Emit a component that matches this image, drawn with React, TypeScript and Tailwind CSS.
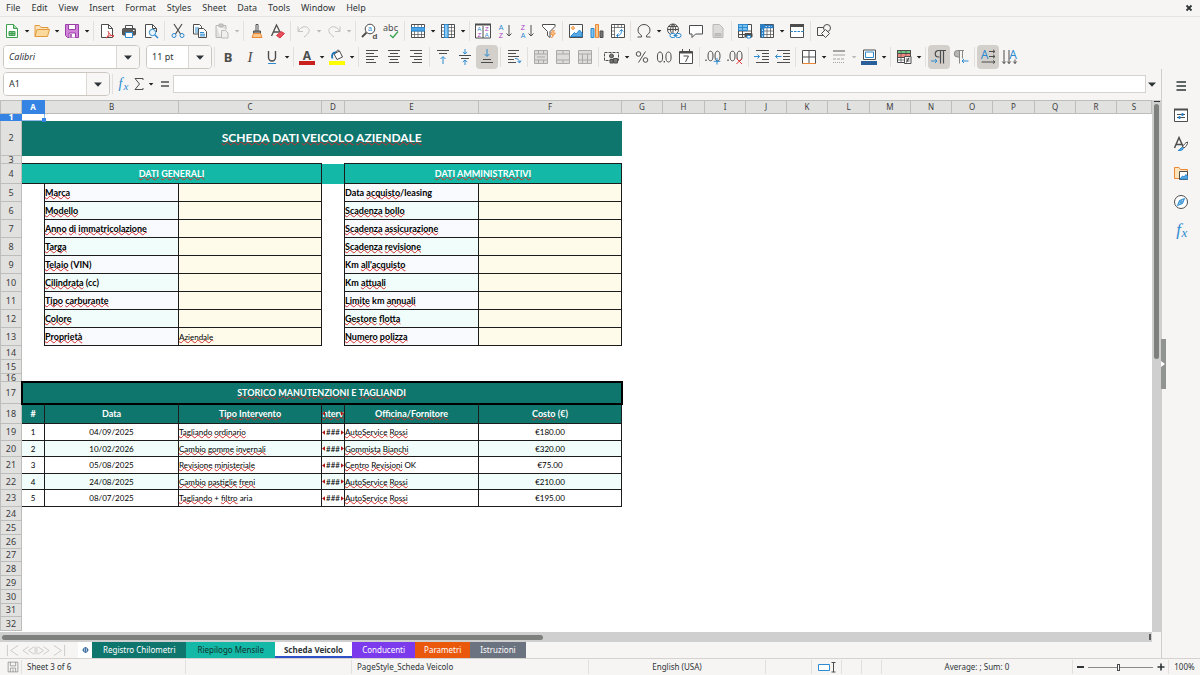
import { Fragment, type ReactNode } from "react";

const INK = "#4d4d4d";
const BLUE = "#2b8ad0";
const ORANGE = "#ed8733";
const PURPLE = "#a33ec0";
const GREY = "#b9b9b7";

type ToolItem = {
  label: string;
  icon: ReactNode;
  caret?: boolean;
  active?: boolean;
  disabled?: boolean;
};

type Group = {
  items: ToolItem[];
  tight?: boolean;
};

function Icon({ children, stroke = INK }: { children: ReactNode; stroke?: string }) {
  return (
    <svg viewBox="0 0 16 16" className="h-4 w-4 shrink-0 overflow-visible" fill="none" stroke={stroke} aria-hidden>
      {children}
    </svg>
  );
}

function Glyph({
  x,
  y,
  size,
  fill = INK,
  bold,
  italic,
  family = "Noto Sans, sans-serif",
  children,
}: {
  x: number;
  y: number;
  size: number;
  fill?: string;
  bold?: boolean;
  italic?: boolean;
  family?: string;
  children: string;
}) {
  return (
    <text
      x={x}
      y={y}
      fontSize={size}
      fill={fill}
      stroke="none"
      textAnchor="middle"
      fontWeight={bold ? 700 : 400}
      fontStyle={italic ? "italic" : "normal"}
      fontFamily={family}
    >
      {children}
    </text>
  );
}

const SERIF = "Liberation Serif, serif";
const SANS = "Liberation Sans, sans-serif";

function Caret({ disabled }: { disabled?: boolean }) {
  return (
    <svg viewBox="0 0 8 8" className="h-2 w-2 shrink-0" fill={disabled ? GREY : "#1f1f1f"} aria-hidden>
      <path d="M1.8 3h4.6L4.1 5.6Z" />
    </svg>
  );
}

function BigCaret() {
  return (
    <svg viewBox="0 0 8 5" className="h-[5px] w-2" fill="#2e3436" aria-hidden>
      <path d="M0 .5h8L4 4.7Z" />
    </svg>
  );
}

/* Lines for the paragraph alignment icons: [x1, x2, y] */
function Lines({ rows }: { rows: number[][] }) {
  return (
    <>
      {rows.map(([x1, x2, y]) => (
        <path key={y} d={`M${x1} ${y}H${x2}`} />
      ))}
    </>
  );
}

function TableGrid() {
  return (
    <>
      <path d="M1.5 1.5h13v13h-13Z" fill="#fff" />
      <path d="M1.5 4.5h13M1.5 8h13M1.5 11.5h13M4.5 1.5v13M8 1.5v13M11.5 1.5v13" strokeWidth=".7" />
    </>
  );
}

function MergeIcon({ d }: { d: string }) {
  return (
    <Icon stroke="#a9a9a7">
      <path d="M1.5 1.5h13v13h-13Z" fill="#dddcda" />
      <path d={d} />
    </Icon>
  );
}

const standardGroups: Group[] = [
  {
    items: [
      {
        label: "New",
        caret: true,
        icon: (
          <Icon stroke="#3ea04e">
            <path d="M2.5 1.5h7l4 4v9h-11Z" fill="#fff" />
            <path d="M9.5 1.5v4h4" fill="#a8dcb0" />
            <path d="M5 8.5h6v4H5ZM5 10.5h6M8 8.5v4" fill="#8bd096" />
          </Icon>
        ),
      },
      {
        label: "Open",
        caret: true,
        icon: (
          <Icon stroke="#e39a3c">
            <path d="M1 13.5v-11h4.5l1.5 2h7v3" fill="#fbe3bb" />
            <path d="M1 13.5l2-7h12.5l-2 7Z" fill="#fbd99c" />
          </Icon>
        ),
      },
      {
        label: "Save",
        caret: true,
        icon: (
          <Icon stroke="#9a3fa8">
            <path d="M1.5 1.5h13v13h-11l-2-2Z" fill="#d183da" />
            <path d="M4.5 1.5h7v5h-7ZM5 14.5V10h6.5v4.5" fill="#fff" />
            <path d="M7 11v3.5" strokeWidth="1.5" />
          </Icon>
        ),
      },
    ],
  },
  {
    items: [
      {
        label: "Export as PDF",
        icon: (
          <Icon>
            <path d="M2.5 1.5h7l4 4v9h-11Z" fill="#fff" />
            <path d="M9.5 1.5v4h4" />
            <path d="M9 8c1 3 3 5 6 5.5M10 10c-.5 2-1.500 4-3 5 2-2 5-3 8-2.500" stroke="#d94040" />
          </Icon>
        ),
      },
      {
        label: "Print",
        icon: (
          <Icon>
            <path d="M4.5 5V2.5h7V5" fill="#fff" />
            <rect x="1.5" y="5.5" width="13" height="6.5" rx="1" fill="#5c5c5c" />
            <path d="M4.5 9.5h7v5h-7Z" fill="#fff" stroke={BLUE} />
            <path d="M12 7.5h1.5" stroke="#fff" />
          </Icon>
        ),
      },
      {
        label: "Print Preview",
        icon: (
          <Icon>
            <path d="M13.5 9V5.5l-4-4h-7v13h6" fill="#fff" />
            <path d="M9.5 1.5v4h4" />
            <circle cx="9.5" cy="9.5" r="3.2" fill="#e9f4fc" stroke={BLUE} />
            <path d="m12 12 3 3" stroke={BLUE} strokeWidth="1.5" />
          </Icon>
        ),
      },
    ],
  },
  {
    items: [
      {
        label: "Cut",
        icon: (
          <Icon>
            <path d="M4 1l6.5 10M12 1 5.5 11" strokeWidth="1.2" />
            <circle cx="4" cy="12.5" r="2" stroke={BLUE} />
            <circle cx="12" cy="12.5" r="2" stroke={BLUE} />
          </Icon>
        ),
      },
      {
        label: "Copy",
        icon: (
          <Icon>
            <path d="M1.5 1.5h6l2 2V11h-8Z" fill="#fff" />
            <path d="M3 5h4M3 7h3M3 9h3" stroke={BLUE} />
            <path d="M6.5 5.5h5l3 3v6h-8Z" fill="#fff" />
            <path d="M8 9.5h4M8 11.2h5M8 12.9h5" stroke={BLUE} />
          </Icon>
        ),
      },
      {
        label: "Paste",
        caret: true,
        disabled: true,
        icon: (
          <Icon stroke={GREY}>
            <path d="M2 2.5h10v4M2 2.5v12h5" fill="#e1e0de" />
            <path d="M5 1h4v3H5Z" fill="#c7c6c4" />
            <path d="M7.5 7.5h4L14 10v5H7.500Z" fill="#f0efed" />
          </Icon>
        ),
      },
    ],
  },
  {
    tight: true,
    items: [
      {
        label: "Clone Formatting",
        icon: (
          <Icon>
            <path d="M7 8V1.5h2V8" fill="#fff" />
            <path d="M4.5 8h7v2.5h-7Z" fill="#888" />
            <path d="M4.500 10.500 3 14.500h10l-1.500-4Z" fill="#fbc88c" stroke={ORANGE} />
          </Icon>
        ),
      },
      {
        label: "Clear Direct Formatting",
        icon: (
          <Icon>
            <path d="M1.5 13 6.5 2l4 8M3.5 9H9" strokeWidth="1.3" />
            <path d="m6.5 12.5 4.5-4 3.5 2L10 15Z" fill="#e8505b" stroke="#d33a47" />
          </Icon>
        ),
      },
    ],
  },
  {
    items: [
      {
        label: "Undo",
        caret: true,
        disabled: true,
        icon: (
          <Icon stroke="#c4c3c1">
            <path d="M2 3.5v5h5M2.5 8C5 3.5 9 3 11.5 4.5c3 2 2 6-3.5 9.5" />
          </Icon>
        ),
      },
      {
        label: "Redo",
        caret: true,
        disabled: true,
        icon: (
          <Icon stroke="#c4c3c1">
            <path d="M14 3.5v5H9M13.5 8C11 3.5 7 3 4.5 4.5c-3 2-2 6 3.5 9.5" />
          </Icon>
        ),
      },
    ],
  },
  {
    items: [
      {
        label: "Find & Replace",
        icon: (
          <Icon>
            <circle cx="9" cy="6" r="4.8" fill="#fff" />
            <path d="M5.5 9.5 1 14" strokeWidth="1.800" />
            <Glyph x={9} y={8} size={7} fill={BLUE} family={SANS}>a</Glyph>
            <Glyph x={14} y={15.5} size={8} bold family={SANS}>d</Glyph>
          </Icon>
        ),
      },
      {
        label: "Spelling",
        icon: (
          <Icon>
            <Glyph x={7.5} y={8} size={9}>abc</Glyph>
            <path d="m7 12 3 2.500 5-6" stroke="#37a655" strokeWidth="1.300" />
          </Icon>
        ),
      },
    ],
  },
  {
    items: [
      {
        label: "Row",
        caret: true,
        icon: (
          <Icon>
            <TableGrid />
            <path d="M1.5 4.5h13V8h-13Z" fill="#4aa3e6" stroke={BLUE} />
          </Icon>
        ),
      },
      {
        label: "Column",
        caret: true,
        icon: (
          <Icon>
            <TableGrid />
            <path d="M4.5 1.5H8v13H4.5Z" fill="#8cc8f2" stroke={BLUE} />
          </Icon>
        ),
      },
    ],
  },
  {
    items: [
      {
        label: "Sort",
        icon: (
          <Icon>
            <path d="M.5 1.5h15v13.500H.5ZM8 3v12" fill="#fff" />
            <path d="M0 1.500h16" strokeWidth="2" />
            <Glyph x={4.3} y={8.3} size={6} fill={BLUE} family={SANS}>A</Glyph>
            <Glyph x={4.3} y={14.3} size={6} fill={PURPLE} family={SANS}>Z</Glyph>
            <Glyph x={11.8} y={8.3} size={6} fill={PURPLE} family={SANS}>Z</Glyph>
            <Glyph x={11.8} y={14.3} size={6} fill={BLUE} family={SANS}>A</Glyph>
          </Icon>
        ),
      },
      {
        label: "Sort Ascending",
        icon: (
          <Icon>
            <Glyph x={4} y={6.5} size={7} fill={BLUE} family={SANS}>A</Glyph>
            <Glyph x={4} y={15} size={7} fill={PURPLE} family={SANS}>Z</Glyph>
            <path d="M12 2v11M9.500 10.500 12 13l2.500-2.500" />
          </Icon>
        ),
      },
      {
        label: "Sort Descending",
        icon: (
          <Icon>
            <Glyph x={4} y={6.5} size={7} fill={PURPLE} family={SANS}>Z</Glyph>
            <Glyph x={4} y={15} size={7} fill={BLUE} family={SANS}>A</Glyph>
            <path d="M12 2v11M9.500 10.500 12 13l2.500-2.500" />
          </Icon>
        ),
      },
      {
        label: "AutoFilter",
        icon: (
          <Icon>
            <path d="M1.5 1.5H14v2l-5 5v6l-2.500-2v-4l-5-5Z" fill="#fff" />
            <path d="m11.5 7.5-2 4H12L10.5 15l4-5H12l1.500-2.500Z" fill="#fbc88c" stroke={ORANGE} strokeWidth=".7" />
          </Icon>
        ),
      },
    ],
  },
  {
    tight: true,
    items: [
      {
        label: "Insert Image",
        icon: (
          <Icon>
            <path d="M1.5 1.5h13v13h-13Z" fill="#fff" />
            <circle cx="5" cy="5" r="1.5" fill="#fbc88c" stroke={ORANGE} strokeWidth=".7" />
            <path d="m2.500 13.500 4-4L8 11l3.500-4 2.500 3v3.500Z" fill="#5aa9e3" stroke={BLUE} />
          </Icon>
        ),
      },
      {
        label: "Insert Chart",
        icon: (
          <Icon>
            <path d="M2 5.5h3v9H2Z" fill="#7cc0f0" stroke={BLUE} />
            <path d="M6.5 1.5h3v13h-3Z" fill="#fbc88c" stroke={ORANGE} />
            <path d="M11 8h3v6.5h-3Z" fill="#777" />
          </Icon>
        ),
      },
      {
        label: "Insert Pivot Table",
        icon: (
          <Icon>
            <path d="M1.5 1.5h13v13h-13Z" fill="#fff" />
            <path d="M1.5 4.5h13M4.5 1.5v13M8 1.5v3M11.5 1.5v3M1.5 8h3M1.5 11.5h3" strokeWidth=".7" />
            <path d="M7 12.5c3 0 4.5-1 4.5-5.5M9.5 8.5l2-2 2 2M8.500 10.500l-2 2 2 2" stroke={BLUE} />
          </Icon>
        ),
      },
    ],
  },
  {
    items: [
      {
        label: "Special Character",
        caret: true,
        icon: (
          <Icon>
            <path d="M1.5 14h4v-1.500C3 11 2 9 2 7a6 5.500 0 0 1 12 0c0 2-1 4-3.500 5.500V14h4" />
          </Icon>
        ),
      },
      {
        label: "Hyperlink",
        icon: (
          <Icon>
            <circle cx="7" cy="6.5" r="5.5" />
            <path d="M1.5 6.5h11M7 1v9M2.5 3.5h9M7 1C4 4 4 8 5.5 10M7 1c2.500 2 3 5 2.500 7" />
            <rect x="4" y="10.5" width="5.5" height="4" rx="2" fill="#f6f5f4" stroke={BLUE} />
            <rect x="9.5" y="10.5" width="5.5" height="4" rx="2" fill="#f6f5f4" stroke={BLUE} />
            <path d="M7.5 12.5h4" stroke={BLUE} />
          </Icon>
        ),
      },
      {
        label: "Comment",
        icon: (
          <Icon>
            <path d="M1.5 2.5h13V11h-7L4 14.500V11H1.500Z" fill="#fff" />
          </Icon>
        ),
      },
      {
        label: "Headers and Footers",
        disabled: true,
        icon: (
          <Icon stroke={GREY}>
            <path d="M3 1.5h6.500l3.500 3.500v9.500H3Z" fill="#dcdbd9" />
            <path d="M5 10.500h6v2.500H5Z" fill="#c3c2c0" />
          </Icon>
        ),
      },
    ],
  },
  {
    items: [
      {
        label: "Define Print Area",
        icon: (
          <Icon>
            <path d="M1.5 1.5h13v10h-13ZM1.5 8h13M1.5 14.5h6M1.5 11v3.5M5.5 1.5v13" fill="#fff" />
            <path d="M1.5 1.5h9v6h-9ZM1.5 4.5h9M5.5 1.5v6" fill="#7cc0f0" stroke={BLUE} />
            <path d="M8 10.5h7V14H8Z" fill="#4d4d4d" />
            <path d="M10 12.500h3.500V15H10Z" fill="#fff" stroke={BLUE} />
          </Icon>
        ),
      },
      {
        label: "Freeze Rows and Columns",
        caret: true,
        icon: (
          <Icon>
            <TableGrid />
            <path d="M1 3.500h13.500M3.500 1v13.500" stroke="#2b7fc4" strokeWidth="3.500" />
            <path d="M3.500 6.500V14M6.500 3.500H13" stroke="#bfe0f7" strokeDasharray="1.500 1.500" />
          </Icon>
        ),
      },
      {
        label: "Split Window",
        icon: (
          <Icon>
            <path d="M1.5 2v12.5h13V2" fill="#fff" />
            <path d="M1 2.500h14" strokeWidth="3" />
            <path d="M1.500 8.500h13" stroke={BLUE} strokeDasharray="2.500 1" />
          </Icon>
        ),
      },
    ],
  },
  {
    items: [
      {
        label: "Show Draw Functions",
        icon: (
          <Icon>
            <path d="M1.5 4.5h7v8h-7Z" />
            <circle cx="11" cy="5" r="3.5" fill="#f6f5f4" />
            <path d="m9.500 6.500 4 4-4 4-4-4Z" fill="#f6f5f4" />
          </Icon>
        ),
      },
    ],
  },
];

const formattingGroups: Group[] = [
  {
    items: [
      { label: "Bold", icon: <Icon><Glyph x={8} y={13} size={13} bold>B</Glyph></Icon> },
      { label: "Italic", icon: <Icon><Glyph x={8} y={13} size={15} italic family={SERIF}>I</Glyph></Icon> },
      {
        label: "Underline",
        caret: true,
        icon: (
          <Icon>
            <path d="M4.5 2v6.5a3.5 3.5 0 0 0 7 0V2" strokeWidth="1.400" />
            <path d="M4 14.5h8" stroke={BLUE} />
          </Icon>
        ),
      },
    ],
  },
  {
    items: [
      {
        label: "Font Color",
        caret: true,
        icon: (
          <Icon>
            <Glyph x={8} y={10.5} size={12} bold>A</Glyph>
            <path d="M0 14h16" stroke="#c9211e" strokeWidth="4" />
          </Icon>
        ),
      },
      {
        label: "Highlighting Color",
        caret: true,
        icon: (
          <Icon>
            <path d="M5 5 10.500 2l3 6-5.500 2.500ZM7 4c0-3 3-4 3.500-1" fill="#fff" />
            <path d="M3.500 9.500C2 6 4 3 7 3.500" stroke="#1c74b8" strokeWidth="1.800" />
            <path d="M0 14h16" stroke="#ffff00" strokeWidth="4" />
          </Icon>
        ),
      },
    ],
  },
  {
    items: [
      { label: "Align Left", icon: <Icon><Lines rows={[[2, 14, 1.5], [2, 10, 4.5], [2, 14, 7.5], [2, 10, 10.5], [2, 12, 13.5]]} /></Icon> },
      { label: "Center Horizontally", icon: <Icon><Lines rows={[[2, 14, 1.5], [4, 12, 4.5], [2, 14, 7.5], [4, 12, 10.5], [3, 13, 13.5]]} /></Icon> },
      { label: "Align Right", icon: <Icon><Lines rows={[[2, 14, 1.5], [6, 14, 4.5], [2, 14, 7.5], [6, 14, 10.5], [4, 14, 13.5]]} /></Icon> },
    ],
  },
  {
    items: [
      {
        label: "Align Top",
        icon: (
          <Icon>
            <Lines rows={[[2, 14, 1.5], [4, 12, 4.5]]} />
            <path d="M8 15V8M5.500 10 8 7.500l2.500 2.500" stroke={BLUE} />
          </Icon>
        ),
      },
      {
        label: "Center Vertically",
        icon: (
          <Icon>
            <Lines rows={[[2, 14, 6.5], [4, 12, 9.5]]} />
            <path d="M8 0v5M5.800 3 8 5l2.200-2M8 16v-5M5.800 13 8 11l2.200 2" stroke={BLUE} />
          </Icon>
        ),
      },
      {
        label: "Align Bottom",
        active: true,
        icon: (
          <Icon>
            <Lines rows={[[4, 12, 10.5], [2, 14, 13.5]]} />
            <path d="M8 0v7M5.500 5 8 7.500 10.500 5" stroke={BLUE} />
          </Icon>
        ),
      },
    ],
  },
  {
    items: [
      {
        label: "Wrap Text",
        icon: (
          <Icon>
            <Lines rows={[[2, 13, 1.5], [2, 10, 4.5], [2, 13, 7.5], [2, 8, 10.5], [2, 10, 13.5]]} />
            <path d="M9 9.500c3 0 4 1 4.500 4M11.500 12l2 2 1.500-2.500" stroke={BLUE} />
          </Icon>
        ),
      },
    ],
  },
  {
    items: [
      { label: "Merge and Center Cells", disabled: true, icon: <MergeIcon d="M1.5 5h13M1.5 11h13M5.5 1.5V5M10.5 1.5V5M5.5 11v3.500M10.5 11v3.500M4 8h8" /> },
      { label: "Merge Cells", disabled: true, icon: <MergeIcon d="M1.5 5h13M1.5 11h13M8 1.5V5M8 11v3.500" /> },
      { label: "Unmerge Cells", disabled: true, icon: <MergeIcon d="M1.5 5h13M1.5 11h13M5.5 5v9.500M10.500 5v9.500" /> },
    ],
  },
  {
    items: [
      {
        label: "Format as Currency",
        caret: true,
        icon: (
          <Icon>
            <path d="M.5 3.500h14v8H.5Z" strokeDasharray="3 1" />
            <circle cx="7.5" cy="7" r="2" fill="#777" />
            <path d="M6 14v-3.500h3V14ZM9.500 14V9.500h4V14Z" fill="#777" />
          </Icon>
        ),
      },
      {
        label: "Format as Percent",
        icon: (
          <Icon>
            <circle cx="4.5" cy="5" r="2.3" />
            <circle cx="11.5" cy="11" r="2.3" />
            <path d="m11.5 2.5-7 11" />
          </Icon>
        ),
      },
      {
        label: "Format as Number",
        icon: (
          <Icon>
            <ellipse cx="4" cy="8" rx="2.6" ry="5" />
            <ellipse cx="12.5" cy="8" rx="2.6" ry="5" />
            <path d="M8.300 12v1.500" strokeWidth="1.300" />
          </Icon>
        ),
      },
      {
        label: "Format as Date",
        icon: (
          <Icon>
            <path d="M1.5 2.5h13v12h-13Z" fill="#fff" />
            <path d="M1.5 3.5h13" strokeWidth="2" />
            <path d="M4.5 0v3M11.5 0v3M5.5 7h5l-3 6" />
          </Icon>
        ),
      },
    ],
  },
  {
    items: [
      {
        label: "Add Decimal Place",
        icon: (
          <Icon>
            <ellipse cx="5.5" cy="7" rx="2.5" ry="4.800" />
            <ellipse cx="12.5" cy="7" rx="2.5" ry="4.800" />
            <path d="M1 10.500V12" strokeWidth="1.300" />
            <path d="M12 9v6.500M8.700 12.300h6.600" stroke={BLUE} />
          </Icon>
        ),
      },
      {
        label: "Delete Decimal Place",
        icon: (
          <Icon>
            <ellipse cx="5.5" cy="7" rx="2.5" ry="4.800" />
            <ellipse cx="12.5" cy="7" rx="2.5" ry="4.800" />
            <path d="M1 10.500V12" strokeWidth="1.300" />
            <path d="m9.500 9.500 5.500 5.500M15 9.500 9.500 15" stroke="#e03a3a" />
          </Icon>
        ),
      },
    ],
  },
  {
    tight: true,
    items: [
      {
        label: "Increase Indent",
        icon: (
          <Icon>
            <Lines rows={[[2, 15, 1.5], [8, 15, 4.5], [8, 15, 7.5], [8, 15, 10.5], [2, 15, 13.5]]} />
            <path d="M0 7.5h5.500M3.500 5.500l2 2-2 2" stroke={BLUE} />
          </Icon>
        ),
      },
      {
        label: "Decrease Indent",
        icon: (
          <Icon>
            <Lines rows={[[2, 15, 1.5], [8, 15, 4.5], [8, 15, 7.5], [8, 15, 10.5], [2, 15, 13.5]]} />
            <path d="M.5 7.5h6M2.500 5.500l-2 2 2 2" stroke={BLUE} />
          </Icon>
        ),
      },
    ],
  },
  {
    items: [
      {
        label: "Borders",
        caret: true,
        icon: (
          <Icon>
            <path d="M1.5 1.5h13v13h-13ZM8 1.5v13M1.5 8h13" fill="#fff" />
            <path d="M1.5 14.500h13" stroke={ORANGE} />
          </Icon>
        ),
      },
      {
        label: "Border Style",
        caret: true,
        disabled: true,
        icon: (
          <Icon stroke="#a3a3a1">
            <path d="M2 2h12" strokeWidth="2" />
            <path d="M2 6h12" />
            <path d="M2 10h12" strokeDasharray="3 1" />
            <path d="M2 13.500h12" strokeDasharray="1 1" />
          </Icon>
        ),
      },
      {
        label: "Border Color",
        caret: true,
        icon: (
          <Icon>
            <path d="M2.5 1h12v9.500h-12Z" fill="#fff" />
            <path d="M4.5 3h8v5.500h-8Z" stroke={BLUE} />
            <path d="M0 14h16" stroke="#2a6099" strokeWidth="4" />
          </Icon>
        ),
      },
    ],
  },
  {
    items: [
      {
        label: "Conditional",
        caret: true,
        icon: (
          <Icon>
            <path d="M1.5 1.5h13v12h-13Z" fill="#fff" />
            <path d="M1.5 1.5h13v3h-13Z" fill="#6fc985" />
            <path d="M1.5 4.5h13v4h-13Z" fill="#f08a80" />
            <path d="M5 1.5v12M10 1.5v5M1.5 11h7" strokeWidth=".7" />
            <path d="M8.5 7.500H15v7H8.500ZM10 10h3.500M10 12h3.500M13 8.500l-2.500 5" fill="#fff" />
          </Icon>
        ),
      },
    ],
  },
  {
    items: [
      {
        label: "Left-To-Right",
        active: true,
        icon: (
          <Icon>
            <path d="M15 1.500H7.500a3.200 3.200 0 0 0 0 6.500h1M9.500 1.500v13M12.500 1.500v13" strokeWidth="1.200" />
            <path d="M0 12h6M4 10l2 2-2 2" stroke={BLUE} />
          </Icon>
        ),
      },
      {
        label: "Right-To-Left",
        icon: (
          <Icon stroke="#888">
            <path d="M6.500 1.500H4.500a3.200 3.200 0 0 0 0 6.500h2Z" fill="#b5b5b3" />
            <path d="M4.500 1.500H11M6.500 1.500v13M9.500 1.500v8" />
            <path d="M15.500 12H9M11 10l-2 2 2 2" stroke={BLUE} />
          </Icon>
        ),
      },
    ],
  },
  {
    items: [
      {
        label: "Text direction from left to right",
        active: true,
        icon: (
          <Icon>
            <Glyph x={4.5} y={9.5} size={12} fill={BLUE}>A</Glyph>
            <path d="M9 2.5h6M9 7.5h6M1.5 13H15M13 .8l2 1.700-2 1.700M13 5.800l2 1.700-2 1.700M13 11.300l2 1.700-2 1.700" />
          </Icon>
        ),
      },
      {
        label: "Text direction from top to bottom",
        icon: (
          <Icon>
            <Glyph x={11} y={9.5} size={12} fill={BLUE}>A</Glyph>
            <path d="M2 1v13.500M7 1v13.500M13 10.500v4M.3 12.500l1.700 2 1.700-2M5.300 12.500l1.700 2 1.700-2M11.300 12.500l1.700 2 1.700-2" />
          </Icon>
        ),
      },
    ],
  },
];

function Divider() {
  return <div className="mx-0.5 h-5 w-px shrink-0 bg-[#e2dfdc]" />;
}

function Toolbar({ groups, label }: { groups: Group[]; label: string }) {
  return (
    <div role="toolbar" aria-label={label} className="flex items-center">
      {groups.map((group, index) => (
        <Fragment key={group.items[0].label}>
          {index > 0 ? <Divider /> : null}
          {group.items.map((item) => (
            <div key={item.label} className="flex items-center">
              <button
                type="button"
                aria-label={item.label}
                aria-pressed={item.active}
                disabled={item.disabled}
                className={`flex h-6 items-center justify-center rounded ${group.tight ? "w-[21px]" : "w-[22px]"} ${item.active ? "bg-[#d3d0cc]" : ""}`}
              >
                {item.icon}
              </button>
              {item.caret ? (
                <button type="button" aria-label={`${item.label} options`} disabled={item.disabled} className="flex h-6 w-2 items-center">
                  <Caret disabled={item.disabled} />
                </button>
              ) : null}
            </div>
          ))}
        </Fragment>
      ))}
    </div>
  );
}

function Combo({ label, value, className, italic }: { label: string; value: string; className: string; italic?: boolean }) {
  return (
    <div className={`flex shrink-0 overflow-hidden rounded border border-[#cdc7c2] bg-white ${className}`}>
      <input aria-label={label} defaultValue={value} className={`min-w-0 flex-1 bg-white px-[5px] outline-none ${italic ? "italic" : ""}`} />
      <button type="button" aria-label={`${label} list`} className="flex w-[23px] items-center justify-center border-l border-[#dcd8d4] bg-[#f8f7f6]">
        <BigCaret />
      </button>
    </div>
  );
}

/* Words in square brackets get the spell checker's red wave. */
function Spell({ text }: { text: string }) {
  return (
    <>
      {text.split(/(\[[^\]]+\])/).map((part, index) =>
        part.startsWith("[") ? (
          <span key={index} className="underline decoration-[#d02c2c] decoration-wavy decoration-1 underline-offset-[-1px] [text-decoration-skip-ink:none]">
            {part.slice(1, -1)}
          </span>
        ) : (
          part
        ),
      )}
    </>
  );
}

const columns = [
  { name: "A", width: 23 },
  { name: "B", width: 134 },
  { name: "C", width: 143 },
  { name: "D", width: 23 },
  { name: "E", width: 134 },
  { name: "F", width: 143 },
  ..."GHIJKLMNOPQR".split("").map((name, index) => ({ name, width: index % 4 === 1 ? 42 : 41 })),
];

const vehicleRows = [
  ["[Marca]", "", "Data [acquisto]/leasing"],
  ["[Modello]", "", "[Scadenza] [bollo]"],
  ["[Anno] [di] [immatricolazione]", "", "[Scadenza] [assicurazione]"],
  ["[Targa]", "", "[Scadenza] [revisione]"],
  ["[Telaio] (VIN)", "", "Km [all'acquisto]"],
  ["[Cilindrata] (cc)", "", "Km [attuali]"],
  ["[Tipo] [carburante]", "", "[Limite] km [annuali]"],
  ["[Colore]", "", "[Gestore] [flotta]"],
  ["[Proprietà]", "[Aziendale]", "[Numero] [polizza]"],
];

const serviceRows = [
  { date: "04/09/2025", job: "[Tagliando] [ordinario]", shop: "[AutoService] [Rossi]", cost: "€180.00", height: 17 },
  { date: "10/02/2026", job: "[Cambio] [gomme] [invernali]", shop: "[Gommista] [Bianchi]", cost: "€320.00", height: 16 },
  { date: "05/08/2025", job: "[Revisione] [ministeriale]", shop: "[Centro] [Revisioni] OK", cost: "€75.00", height: 17 },
  { date: "24/08/2025", job: "[Cambio] [pastiglie] [freni]", shop: "[AutoService] [Rossi]", cost: "€210.00", height: 16 },
  { date: "08/07/2025", job: "[Tagliando] + [filtro] aria", shop: "[AutoService] [Rossi]", cost: "€195.00", height: 17 },
];

const trailingHeights = [14, 14, 14, 13, 14, 14, 14, 13, 14];

function Row({ number, height, children }: { number: number; height: number; children?: ReactNode }) {
  return (
    <tr style={{ height }}>
      <th
        scope="row"
        style={{ lineHeight: `${height - 1}px` }}
        className={`border text-[9px] ${number === 1 ? "border-[#3584e4] bg-[#3584e4] font-bold text-white" : "border-[#bdbdbb] bg-[#e1e1e0] font-normal text-[#3c3c3c]"}`}
      >
        {number}
      </th>
      {children}
    </tr>
  );
}

function OverflowMark({ flip }: { flip?: boolean }) {
  return (
    <svg viewBox="0 0 4 6" className={`h-[5px] w-[3px] shrink-0 ${flip ? "rotate-180" : ""}`} fill="#b01818" aria-hidden>
      <path d="M4 0v6L0 3Z" />
    </svg>
  );
}

function Sheet() {
  const line = "border border-[#1c1c1c]";
  const header = `${line} bg-[#0f766e] text-center text-[9px] font-bold text-white`;

  return (
    <table className="w-full table-fixed border-collapse font-['Lato','Noto_Sans',sans-serif] leading-none text-black [&_td]:p-0 [&_td]:leading-none [&_th]:p-0">
      <colgroup>
        <col className="w-[21px]" />
        {columns.map((column) => (
          <col key={column.name} style={{ width: column.width }} />
        ))}
        <col />
      </colgroup>
      <thead className="font-['Noto_Sans',sans-serif] text-[8px]">
        <tr className="h-[13px]">
          <td className="border border-[#bdbdbb] bg-[#e1e1e0]" />
          {[...columns.map((column) => column.name), "S"].map((name) => (
            <th
              key={name}
              scope="col"
              className={`border ${name === "A" ? "border-[#3584e4] bg-[#3584e4] font-bold text-white" : "border-[#bdbdbb] bg-[#e1e1e0] font-normal text-[#3c3c3c]"}`}
            >
              {name}
            </th>
          ))}
        </tr>
      </thead>
      <tbody className="text-[8px] [&_th]:font-['Noto_Sans',sans-serif]">
        <Row number={1} height={7}>
          <td className="relative border border-[#8fb8ea] bg-white">
            <span className="absolute -right-0.5 -bottom-0.5 h-1 w-1 bg-[#3584e4]" />
          </td>
        </Row>
        <Row number={2} height={35}>
          <td colSpan={6} className="bg-[#0f766e] text-center text-[12px] font-bold text-white">
            <Spell text="[SCHEDA] [DATI] [VEICOLO] [AZIENDALE]" />
          </td>
        </Row>
        <Row number={3} height={8} />
        <Row number={4} height={20}>
          <td colSpan={3} className={`${line} bg-[#14b8a6] text-center text-[9px] font-bold text-white`}>
            <Spell text="[DATI] [GENERALI]" />
          </td>
          <td className="bg-[#14b8a6]" />
          <td colSpan={2} className={`${line} bg-[#14b8a6] text-center text-[9px] font-bold text-white`}>
            <Spell text="[DATI] [AMMINISTRATIVI]" />
          </td>
        </Row>
        {vehicleRows.map(([left, value, right], index) => {
          const label = `${line} pl-px text-[9px] font-bold ${index % 2 ? "bg-[#f0fdfa]" : "bg-[#f9fafe]"}`;
          return (
            <Row key={left} number={index + 5} height={18}>
              <td />
              <td className={label}>
                <Spell text={left} />
              </td>
              <td className={`${line} bg-[#fffbeb] pl-px`}>
                <Spell text={value} />
              </td>
              <td />
              <td className={label}>
                <Spell text={right} />
              </td>
              <td className={`${line} bg-[#fffbeb]`} />
            </Row>
          );
        })}
        <Row number={14} height={14} />
        <Row number={15} height={14} />
        <Row number={16} height={8} />
        <Row number={17} height={22}>
          <td colSpan={6} className="border-2 border-black bg-[#0f766e] text-center text-[9px] font-bold text-white">
            <Spell text="[STORICO] [MANUTENZIONI] E [TAGLIANDI]" />
          </td>
        </Row>
        <Row number={18} height={20}>
          <td className={header}>#</td>
          <td className={header}>Data</td>
          <td className={header}>
            <Spell text="[Tipo] [Intervento]" />
          </td>
          <td className={header}>
            <div className="relative flex items-center justify-center">
              <Spell text="[nterv]" />
              <div className="absolute inset-0 flex items-center justify-between">
                <OverflowMark />
                <OverflowMark flip />
              </div>
            </div>
          </td>
          <td className={header}>
            <Spell text="[Officina/Fornitore]" />
          </td>
          <td className={header}>
            <Spell text="[Costo] (€)" />
          </td>
        </Row>
        {serviceRows.map((service, index) => {
          const cell = `${line} ${index % 2 ? "bg-[#f0fdfa]" : "bg-white"}`;
          return (
            <Row key={service.date} number={index + 19} height={service.height}>
              <td className={`${cell} text-center`}>{index + 1}</td>
              <td className={`${cell} text-center`}>{service.date}</td>
              <td className={`${cell} pl-px`}>
                <Spell text={service.job} />
              </td>
              <td className={cell}>
                <div className="flex items-center justify-between">
                  <OverflowMark />
                  ###
                  <OverflowMark flip />
                </div>
              </td>
              <td className={`${cell} pl-px`}>
                <Spell text={service.shop} />
              </td>
              <td className={`${cell} text-center`}>{service.cost}</td>
            </Row>
          );
        })}
        {trailingHeights.map((height, index) => (
          <Row key={index} number={index + 24} height={height} />
        ))}
      </tbody>
    </table>
  );
}

function FormulaBar() {
  return (
    <div className="flex h-[31px] shrink-0 items-center pb-px pl-[3px]">
      <Combo label="Name Box" value="A1" className="h-6 w-[107px]" />
      <Divider />
      <button type="button" aria-label="Function Wizard" className="flex w-4 justify-center">
        <Icon>
          <Glyph x={5.5} y={12} size={14} fill={BLUE} italic family={SERIF}>f</Glyph>
          <Glyph x={11} y={13.5} size={11} fill={BLUE} italic family={SERIF}>x</Glyph>
        </Icon>
      </button>
      <button type="button" aria-label="Select Function" className="flex items-center">
        <Icon>
          <path d="M12 4V2.5H4L8.5 8 4 13.500h8V12" />
        </Icon>
        <Caret />
      </button>
      <button type="button" aria-label="Formula" className="ml-px flex w-[17px] justify-center">
        <Icon>
          <path d="M4 6h8M4 10h8" strokeWidth="1.700" />
        </Icon>
      </button>
      <input aria-label="Input line" className="h-[18px] min-w-0 flex-1 border border-[#d5d2cf] bg-white px-1 outline-none" />
      <button type="button" aria-label="Expand Formula Bar" className="flex w-[15px] justify-center pr-1">
        <BigCaret />
      </button>
    </div>
  );
}

const tabs = [
  { name: "Registro Chilometri", style: "bg-[#0f766e] text-white px-[11px]" },
  { name: "Riepilogo Mensile", style: "bg-[#14b8a6] text-[#12312d] px-[11px]" },
  { name: "Scheda Veicolo", style: "bg-white font-bold px-[9px] shadow-[inset_0_-2px_#2f4fc9]" },
  { name: "Conducenti", style: "bg-[#7c3aed] text-white px-2.5" },
  { name: "Parametri", style: "bg-[#ea580c] text-white px-[9px]" },
  { name: "Istruzioni", style: "bg-[#6b7280] text-white px-2.5" },
];

const tabArrows = [
  { label: "First sheet", d: "M1.5 2v12M13 2.5 5 8l8 5.5" },
  { label: "Previous sheet", d: "M8 4 2 8l6 4M14 4 8 8l6 4M15 4v8" },
  { label: "Next sheet", d: "M2 4l6 4-6 4M8 4l6 4-6 4M1 4v8" },
  { label: "Last sheet", d: "M14.5 2v12M3 2.5 11 8l-8 5.5" },
];

function SheetTabs() {
  return (
    <div className="flex h-4 shrink-0 items-stretch text-[8px]">
      <div className="flex w-[78px] shrink-0 items-center pl-1.5">
        {tabArrows.map((arrow) => (
          <button key={arrow.label} type="button" aria-label={arrow.label}>
            <svg viewBox="0 0 16 16" className="h-[15px] w-[15px]" fill="none" stroke="#cbc9c6" aria-hidden>
              <path d={arrow.d} />
            </svg>
          </button>
        ))}
      </div>
      <button type="button" aria-label="Add sheet" className="flex w-3.5 items-center justify-center bg-white">
        <svg viewBox="0 0 8 8" className="h-2 w-2" fill="none" stroke="#2a6099" aria-hidden>
          <circle cx="4.5" cy="4" r="2.3" />
          <path d="M4.5 1v6M1.5 4h6" strokeWidth=".8" />
        </svg>
      </button>
      {tabs.map((tab) => (
        <button key={tab.name} type="button" className={`whitespace-nowrap ${tab.style}`}>
          {tab.name}
        </button>
      ))}
    </div>
  );
}

const sidebarIcons = [
  {
    label: "Sidebar Settings",
    icon: <Icon stroke="#2e3436"><path d="M3.5 4H13M3.5 8H13M3.5 12H13" strokeWidth="1.500" /></Icon>,
  },
  {
    label: "Properties",
    icon: (
      <Icon>
        <path d="M1.5 2.5h13v12h-13Z" fill="#fff" />
        <path d="M1 2.5h14" strokeWidth="2" />
        <path d="M4 7.5h8M4 10.5h8" />
        <path d="M9.500 6v3M6.500 9v3" stroke={BLUE} strokeWidth="1.800" />
      </Icon>
    ),
  },
  {
    label: "Styles",
    icon: (
      <Icon>
        <path d="M1.5 12 6 1.5l4 9M3 8.5h5.5" strokeWidth="1.500" />
        <path d="M14.5 6c-2 .5-4 3-5 5l1.500 1c2-1.500 4-4 3.500-6Z" fill="#fff" />
        <path d="M5 14.5c2 0 2-3 4.500-3 2 1 0 3.500-4.500 3Z" fill="#5aa9e3" stroke={BLUE} />
      </Icon>
    ),
  },
  {
    label: "Gallery",
    icon: (
      <Icon>
        <path d="M1.5 13.5v-11H6l1.5 2h7v9Z" fill="#fbe3bb" stroke={ORANGE} />
        <path d="M6.5 6.5h8v8h-8Z" fill="#fff" />
        <path d="m7 14 2.500-3 1.500 1 2-2.500 1.500 2V14Z" fill="#5aa9e3" stroke={BLUE} />
      </Icon>
    ),
  },
  {
    label: "Navigator",
    icon: (
      <Icon>
        <circle cx="8" cy="8" r="6.5" fill="#fff" />
        <path d="m11.5 4.500-2 5-5 2 2-5Z" fill="#8cc8f2" stroke={BLUE} />
        <circle cx="8" cy="8" r="1" fill="#fff" stroke={BLUE} />
      </Icon>
    ),
  },
  {
    label: "Functions",
    icon: (
      <Icon>
        <Glyph x={5.5} y={12} size={17} fill={BLUE} italic family={SERIF}>f</Glyph>
        <Glyph x={11.5} y={14} size={13} fill={BLUE} italic family={SERIF}>x</Glyph>
      </Icon>
    ),
  },
];

function StatusBar() {
  const cell = "flex items-center justify-center border-l border-[#e2dfdc] whitespace-nowrap";

  return (
    <footer className="grid h-[17px] shrink-0 grid-cols-[21px_164fr_166fr_237fr_177fr_46px_30px_20px_20px_191fr_96px_32px] border-t border-[#d5d2cf] py-px text-[8px]">
      <span className="flex items-center justify-center pl-1">
        <svg viewBox="0 0 16 16" className="h-3 w-3" fill="none" stroke="#8b8b89" aria-hidden>
          <path d="M1.5 1.5h13v13h-13ZM4.5 1.5v5h7v-5M4.5 14.5v-5h7v5M8 11v3.5" />
        </svg>
      </span>
      <span className="flex items-center border-l border-[#e2dfdc] pl-[5px]">Sheet 3 of 6</span>
      <span className={cell} />
      <span className="flex items-center border-l border-[#e2dfdc] pl-[5px]">PageStyle_Scheda Veicolo</span>
      <span className={cell}>English (USA)</span>
      <span className={cell} />
      <span className={cell}>
        <svg viewBox="0 0 20 12" className="h-3 w-5" fill="none" stroke={INK} aria-hidden>
          <path d="M1.5 3.5h11v6h-11Z" fill="#fff" stroke={BLUE} />
          <path d="M14.5 1.5h4M14.5 11h4M16.5 1.5V11" />
        </svg>
      </span>
      <span className={cell} />
      <span className={cell} />
      <span className={cell}>Average: ; Sum: 0</span>
      <span className={`${cell} gap-1`}>
        <button type="button" aria-label="Zoom out" className="h-0.5 w-[7px] bg-[#2e3436]" />
        <input
          type="range"
          aria-label="Zoom"
          defaultValue={48}
          className="h-3 w-[65px] appearance-none bg-transparent [&::-webkit-slider-runnable-track]:h-px [&::-webkit-slider-runnable-track]:bg-[#8b8b89] [&::-webkit-slider-thumb]:-mt-[3px] [&::-webkit-slider-thumb]:h-[7px] [&::-webkit-slider-thumb]:w-[3px] [&::-webkit-slider-thumb]:appearance-none [&::-webkit-slider-thumb]:border [&::-webkit-slider-thumb]:border-[#4d4d4d] [&::-webkit-slider-thumb]:bg-white"
        />
        <button type="button" aria-label="Zoom in">
          <svg viewBox="0 0 8 8" className="h-2 w-2" stroke="#2e3436" strokeWidth="1.6" aria-hidden>
            <path d="M4 .5v7M.5 4h7" />
          </svg>
        </button>
      </span>
      <span className={cell}>100%</span>
    </footer>
  );
}

const menus = ["File", "Edit", "View", "Insert", "Format", "Styles", "Sheet", "Data", "Tools", "Window", "Help"];

export default function App() {
  return (
    <div className="flex h-screen flex-col overflow-hidden bg-[#f6f5f4] font-['Noto_Sans',sans-serif] text-[9px] text-[#2e3436]">
      <nav aria-label="Menu" className="flex h-[17px] shrink-0 items-center justify-between border-b border-[#e6e3e0] pr-[7px] pl-1.5">
        <div className="flex gap-[11px]">
          {menus.map((menu) => (
            <button key={menu} type="button">
              {menu}
            </button>
          ))}
        </div>
        <button type="button" aria-label="Close document">
          <svg viewBox="0 0 8 8" className="h-2 w-2" stroke="#2e3436" strokeWidth="1.8" aria-hidden>
            <path d="m1.5 1.5 5 5M6.500 1.500l-5 5" />
          </svg>
        </button>
      </nav>

      <div className="flex h-7 shrink-0 items-center pl-px">
        <Toolbar label="Standard" groups={standardGroups} />
      </div>

      <div className="flex h-6 shrink-0 items-center pl-[3px]">
        <Combo label="Font Name" value="Calibri" italic className="mr-1.5 h-6 w-[137px]" />
        <Combo label="Font Size" value="11 pt" className="h-6 w-[66px]" />
        <Divider />
        <Toolbar label="Formatting" groups={formattingGroups} />
      </div>

      <div className="flex min-h-0 flex-1">
        <main className="flex min-w-0 flex-1 flex-col">
          <FormulaBar />
          <div className="flex min-h-0 flex-1">
            <div className="min-w-0 flex-1 overflow-hidden bg-white">
              <Sheet />
            </div>
            <div className="flex w-[9px] shrink-0 flex-col items-center bg-[#cfcfcf] pt-px">
              <div className="h-px w-1.5 bg-[#2e3436]" />
              <div className="mt-0.5 h-[48%] w-[5px] rounded-full bg-[#7e807e]" />
            </div>
          </div>
          <div className="mr-[9px] flex h-2.5 shrink-0 items-center justify-between bg-[#cfcfcf] pl-0.5">
            <div className="h-[5px] w-[47%] rounded-full bg-[#7e807e]" />
            <div className="mr-px h-1.5 w-0.5 bg-[#5c5c5c]" />
          </div>
          <SheetTabs />
        </main>

        <aside aria-label="Sidebar" className="relative flex w-[39px] shrink-0 flex-col items-center gap-[13px] border-l border-[#d0cdca] pt-[9px]">
          {sidebarIcons.map((item) => (
            <button key={item.label} type="button" aria-label={item.label}>
              {item.icon}
            </button>
          ))}
          <button
            type="button"
            aria-label="Hide sidebar"
            className="absolute top-1/2 -left-px flex h-[50px] w-[5px] -translate-y-1/2 items-center bg-[#929492]"
          >
            <svg viewBox="0 0 4 6" className="h-1.5 w-1" fill="#fff" aria-hidden>
              <path d="M0 0v6l4-3Z" />
            </svg>
          </button>
        </aside>
      </div>

      <StatusBar />
    </div>
  );
}
